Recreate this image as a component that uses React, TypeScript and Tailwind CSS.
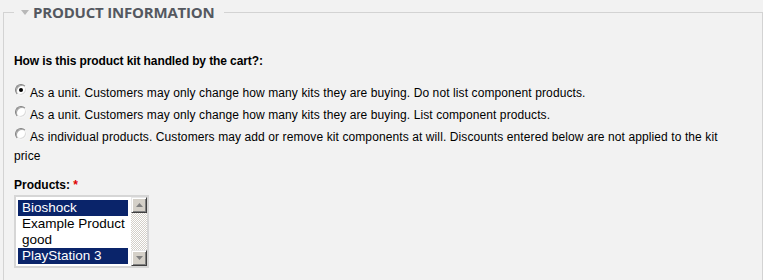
import React from 'react'

const OPTIONS = [
  { label: 'As a unit. Customers may only change how many kits they are buying. Do not list component products.', checked: true },
  { label: 'As a unit. Customers may only change how many kits they are buying. List component products.', checked: false },
  {
    label:
      'As individual products. Customers may add or remove kit components at will. Discounts entered below are not applied to the kit price',
    checked: false,
  },
]

const PRODUCTS = [
  { name: 'Bioshock', selected: true },
  { name: 'Example Product good', selected: false },
  { name: 'PlayStation 3', selected: true },
]

function Radio({ checked }: { checked: boolean }) {
  return (
    <span className="relative ml-[1px] mr-[3px] inline-block h-[12px] w-[12px] rounded-full border border-t-[#808080] border-l-[#808080] border-b-[#f4f4f4] border-r-[#f4f4f4] bg-white align-[1px] shadow-[inset_1px_1px_0_#a8a8a8,inset_-1px_-1px_0_#dcdcdc]">
      {checked && (
        <span className="absolute left-1/2 top-1/2 h-[4px] w-[4px] -translate-x-1/2 -translate-y-1/2 rounded-full bg-black" />
      )}
    </span>
  )
}

function ScrollButton({ dir }: { dir: 'up' | 'down' }) {
  return (
    <div className="flex h-[16px] w-[16px] items-center justify-center border border-t-[#e8e8e8] border-l-[#e8e8e8] border-b-[#404040] border-r-[#404040] bg-[#d4d0c8] shadow-[inset_1px_1px_0_#fff,inset_-1px_-1px_0_#808080]">
      <svg width="7" height="4" viewBox="0 0 7 4" aria-hidden="true">
        {dir === 'up' ? <path d="M3.5 0 L7 4 L0 4 Z" fill="#808080" /> : <path d="M0 0 L7 0 L3.5 4 Z" fill="#808080" />}
      </svg>
    </div>
  )
}

export default function App() {
  return (
    <div className="h-[280px] overflow-hidden bg-[#f2f2f2] pt-[4px] pl-[3px] font-['Liberation_Sans',Arial,sans-serif] text-black">
      <fieldset className="border border-[#d3d3d3] pl-[10px] pr-[22px] pb-[24px]">
        <legend className="pl-[7px] pr-[9px]">
          <span className="flex items-center font-['Open_Sans',sans-serif] text-[15px] leading-[16px] font-bold tracking-[-0.2px] text-[#545860]">
            <svg width="8" height="5" viewBox="0 0 8 5" className="mr-[4px]" aria-hidden="true">
              <path d="M0 0 L8 0 L4 5 Z" fill="#b8b8b8" />
            </svg>
            PRODUCT INFORMATION
          </span>
        </legend>

        <p className="mt-[32px] text-[12px] leading-[19px] font-bold tracking-[-0.1px]">
          How is this product kit handled by the cart?:
        </p>

        <div className="mt-[13px]">
          {OPTIONS.map((opt, i) => (
            <label key={i} className="mb-[3px] block text-[12px] leading-[19px] tracking-[0.1px]">
              <Radio checked={opt.checked} />
              {opt.label}
            </label>
          ))}
        </div>

        <p className="mt-[10px] text-[12px] leading-[19px] font-bold">
          Products: <span className="text-[#e00000]">*</span>
        </p>

        {/* listbox */}
        <div className="flex h-[73px] w-[135px] border-2 border-[#d6d6d6] bg-white">
          <div className="flex-1 pt-[3px] pl-[2px] pr-[3px]">
            {PRODUCTS.map((p) => (
              <div
                key={p.name}
                className={`pl-[4px] text-[13.5px] leading-[16px] ${p.selected ? 'bg-[#0a246a] text-white' : 'text-black'}`}
              >
                {p.name}
              </div>
            ))}
          </div>
          <div className="flex w-[16px] flex-col bg-[repeating-conic-gradient(#d4d0c8_0_25%,#fff_0_50%)] bg-[length:2px_2px]">
            <ScrollButton dir="up" />
            <div className="flex-1" />
            <ScrollButton dir="down" />
          </div>
        </div>
      </fieldset>
    </div>
  )
}
